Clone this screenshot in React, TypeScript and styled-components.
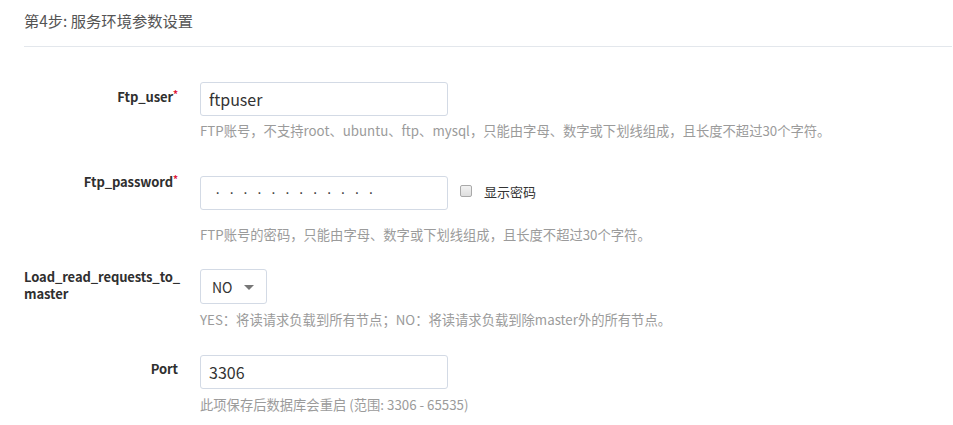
import { createGlobalStyle } from "styled-components";
import styled from "styled-components";

const GlobalStyle = createGlobalStyle`
  html, body {
    margin: 0;
    padding: 0;
    background: #ffffff;
  }
  body {
    font-family: "Noto Sans CJK SC", "Noto Sans", sans-serif;
    color: #333333;
  }
`;

function App() {
  return (
    <>
      <GlobalStyle />
      <StyledWrapper>
        <StyledHeader>
          <StyledTitle>第4步: 服务环境参数设置</StyledTitle>
        </StyledHeader>
        <StyledForm>
          <StyledRow $bottom={36}>
            <StyledLabel $top={7}>
              Ftp_user<StyledRequired>*</StyledRequired>
            </StyledLabel>
            <StyledControl>
              <StyledInput type="text" defaultValue="ftpuser" />
              <StyledHelp $gap={6}>
                FTP账号，不支持root、ubuntu、ftp、mysql，只能由字母、数字或下划线组成，且长度不超过30个字符。
              </StyledHelp>
            </StyledControl>
          </StyledRow>

          <StyledRow $bottom={25}>
            <StyledLabel $top={-2}>
              Ftp_password<StyledRequired>*</StyledRequired>
            </StyledLabel>
            <StyledControl>
              <StyledInline>
                <StyledPassword type="text" readOnly value="············" />
                <StyledCheckLabel>
                  <StyledCheckbox type="checkbox" />
                  <span>显示密码</span>
                </StyledCheckLabel>
              </StyledInline>
              <StyledHelp $gap={16}>
                FTP账号的密码，只能由字母、数字或下划线组成，且长度不超过30个字符。
              </StyledHelp>
            </StyledControl>
          </StyledRow>

          <StyledRow $bottom={26}>
            <StyledLabel $top={-1} $left $lines>
              Load_read_requests_to_
              <br />
              master
            </StyledLabel>
            <StyledControl>
              <StyledSelect>
                <span>NO</span>
                <StyledCaret />
              </StyledSelect>
              <StyledHelp $gap={7}>
                YES：将读请求负载到所有节点；NO：将读请求负载到除master外的所有节点。
              </StyledHelp>
            </StyledControl>
          </StyledRow>

          <StyledRow $bottom={20}>
            <StyledLabel $top={6}>Port</StyledLabel>
            <StyledControl>
              <StyledInput type="text" defaultValue="3306" />
              <StyledHelp $gap={7}>此项保存后数据库会重启 (范围: 3306 - 65535)</StyledHelp>
            </StyledControl>
          </StyledRow>
        </StyledForm>
      </StyledWrapper>
    </>
  );
}

export default App;

const StyledWrapper = styled.div`
  padding-left: 24px;
  padding-right: 1px;
`;

const StyledHeader = styled.header`
  padding: 10px 0 16px;
  border-bottom: 1px solid #e3e7ec;
`;

const StyledTitle = styled.h2`
  margin: 0;
  font-size: 15.3px;
  line-height: 20px;
  font-weight: 400;
  color: #555555;
`;

const StyledForm = styled.form`
  display: flex;
  flex-direction: column;
  padding-top: 35px;
`;

const StyledRow = styled.div<{ $bottom: number }>`
  display: grid;
  grid-template-columns: 154px 1fr;
  column-gap: 22px;
  margin-bottom: ${({ $bottom }) => $bottom}px;
`;

const StyledLabel = styled.label<{ $top: number; $left?: boolean; $lines?: boolean }>`
  margin-top: ${({ $top }) => $top}px;
  text-align: ${({ $left }) => ($left ? "left" : "right")};
  font-size: 13px;
  line-height: ${({ $lines }) => ($lines ? "17px" : "16px")};
  font-weight: 700;
  letter-spacing: -0.1px;
  color: #2f2f2f;
`;

const StyledRequired = styled.sup`
  color: #e0193a;
  font-size: 10px;
  font-weight: 700;
  line-height: 0;
  vertical-align: 4px;
`;

const StyledControl = styled.div`
  display: flex;
  flex-direction: column;
  align-items: flex-start;
`;

const StyledInline = styled.div`
  display: flex;
  align-items: center;
  gap: 12px;
`;

const StyledInput = styled.input`
  box-sizing: border-box;
  width: 248px;
  height: 34px;
  padding: 0 8px;
  border: 1px solid #d3dae5;
  border-radius: 3px;
  font-family: inherit;
  font-size: 16px;
  color: #333333;
  background: #ffffff;
  outline: none;
`;

const StyledPassword = styled(StyledInput)`
  padding-left: 14px;
  font-family: "Liberation Sans", sans-serif;
  letter-spacing: 8.6px;
  font-size: 16px;
  color: #444444;
`;

const StyledCheckLabel = styled.label`
  display: flex;
  align-items: center;
  gap: 12px;
  font-size: 13px;
  color: #333333;
  margin-top: -4px;
`;

const StyledCheckbox = styled.input`
  appearance: none;
  margin: 0;
  width: 12px;
  height: 12px;
  border: 1px solid #a9a9a9;
  border-radius: 2px;
  background: linear-gradient(#f2f2f2, #dedede);
`;

const StyledSelect = styled.div`
  box-sizing: border-box;
  display: flex;
  align-items: center;
  justify-content: space-between;
  width: 67px;
  height: 35px;
  padding: 0 12px 0 11px;
  border: 1px solid #d3dae5;
  border-radius: 3px;
  font-size: 14px;
  color: #333333;
`;

const StyledCaret = styled.span`
  width: 0;
  height: 0;
  margin-top: 2px;
  border-left: 5px solid transparent;
  border-right: 5px solid transparent;
  border-top: 5px solid #777777;
`;

const StyledHelp = styled.p<{ $gap: number }>`
  margin: ${({ $gap }) => $gap}px 0 0;
  font-size: 13.3px;
  line-height: 18px;
  color: #9b9b9b;
  white-space: nowrap;
`;
